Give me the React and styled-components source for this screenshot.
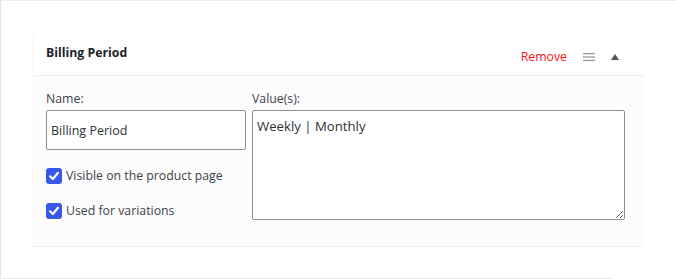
import styled, { createGlobalStyle } from "styled-components";

const GlobalStyle = createGlobalStyle`
  html, body {
    margin: 0;
    padding: 0;
    background: #ffffff;
  }
  body {
    font-family: "Open Sans", "Noto Sans", sans-serif;
    color: #3c434a;
  }
`;

const Panel = styled.div`
  width: 676px;
  height: 279px;
  box-sizing: border-box;
  border-top: 1px solid #ececec;
  border-left: 1px solid #e4e4e4;
  padding: 32px 0 0 32px;
  display: flex;
  flex-direction: column;
`;

const Attribute = styled.div`
  width: 611px;
  box-sizing: border-box;
  border-left: 1px solid #f4f4f4;
  background: #fcfcfc;
  border-bottom: 1px solid #eeeeee;
`;

const Header = styled.div`
  height: 43px;
  box-sizing: border-box;
  background: #ffffff;
  border-bottom: 1px solid #eeeeee;
  display: flex;
  align-items: center;
  padding: 0 22px 0 12px;
`;

const Title = styled.strong`
  flex: 1;
  font-size: 12.3px;
  font-weight: 700;
  color: #1d2327;
  margin-top: -3px;
`;

const Actions = styled.div`
  display: flex;
  align-items: center;
  margin-top: 5px;
`;

const RemoveLink = styled.a`
  color: #ff1020;
  font-size: 12.3px;
  text-decoration: none;
  cursor: pointer;
  margin-right: 15px;
`;

const IconButton = styled.span`
  display: flex;
  align-items: center;
  justify-content: center;
  width: 14px;
  height: 14px;
  margin-right: ${(p) => p.$gap || "0"};
`;

const Body = styled.div`
  display: flex;
  gap: 6px;
  padding: 16px 19px 26px 12px;
`;

const Column = styled.div`
  display: flex;
  flex-direction: column;
  width: ${(p) => p.$width};
`;

const Label = styled.label`
  font-size: 12.3px;
  line-height: 13px;
  margin-bottom: 5px;
  color: #3c434a;
`;

const TextInput = styled.input`
  box-sizing: border-box;
  width: 100%;
  height: 40px;
  border: 1px solid #8c8f94;
  border-radius: 2px;
  padding: 0 4px;
  font-family: "Open Sans", "Noto Sans", sans-serif;
  font-size: 12.5px;
  color: #2c3338;
  background: #ffffff;
  outline: none;
`;

const ValuesArea = styled.textarea`
  box-sizing: border-box;
  width: 100%;
  height: 110px;
  border: 1px solid #8c8f94;
  border-radius: 2px;
  padding: 5px 4px;
  font-family: "Open Sans", "Noto Sans", sans-serif;
  font-size: 13.2px;
  line-height: 20px;
  color: #2c3338;
  background: #ffffff;
  outline: none;
  resize: both;
`;

const CheckRow = styled.label`
  display: flex;
  align-items: center;
  gap: 4px;
  font-size: 12.3px;
  color: #3c434a;
  margin-top: ${(p) => p.$top};
`;

const Box = styled.span`
  width: 16px;
  height: 16px;
  border-radius: 3px;
  background: #3858e9;
  display: flex;
  align-items: center;
  justify-content: center;
  flex-shrink: 0;
`;

const Check = () => (
  <Box>
    <svg width="12" height="12" viewBox="0 0 12 12">
      <path
        d="M2 6.3 L4.8 9 L10 2.8"
        fill="none"
        stroke="#ffffff"
        strokeWidth="2.2"
        strokeLinecap="round"
        strokeLinejoin="round"
      />
    </svg>
  </Box>
);

const BottomRule = styled.div`
  margin-top: auto;
  margin-left: -32px;
  width: 611px;
  height: 1px;
  background: #e8e8e8;
`;

export default function App() {
  return (
    <>
      <GlobalStyle />
      <Panel>
        <Attribute>
          <Header>
            <Title>Billing Period</Title>
            <Actions>
              <RemoveLink>Remove</RemoveLink>
              <IconButton $gap="12px">
                <svg width="12" height="10" viewBox="0 0 12 10">
                  <rect x="0" y="1" width="12" height="1.3" fill="#9a9a9a" />
                  <rect x="0" y="4.4" width="12" height="1.3" fill="#9a9a9a" />
                  <rect x="0" y="7.8" width="12" height="1.3" fill="#9a9a9a" />
                </svg>
              </IconButton>
              <IconButton>
                <svg width="8" height="6" viewBox="0 0 8 6">
                  <path d="M4 0 L8 6 L0 6 Z" fill="#50575e" />
                </svg>
              </IconButton>
            </Actions>
          </Header>
          <Body>
            <Column $width="200px">
              <Label>Name:</Label>
              <TextInput defaultValue="Billing Period" />
              <CheckRow $top="17px">
                <Check />
                Visible on the product page
              </CheckRow>
              <CheckRow $top="18px">
                <Check />
                Used for variations
              </CheckRow>
            </Column>
            <Column $width="373px">
              <Label>Value(s):</Label>
              <ValuesArea defaultValue="Weekly | Monthly" />
            </Column>
          </Body>
        </Attribute>
        <BottomRule />
      </Panel>
    </>
  );
}
